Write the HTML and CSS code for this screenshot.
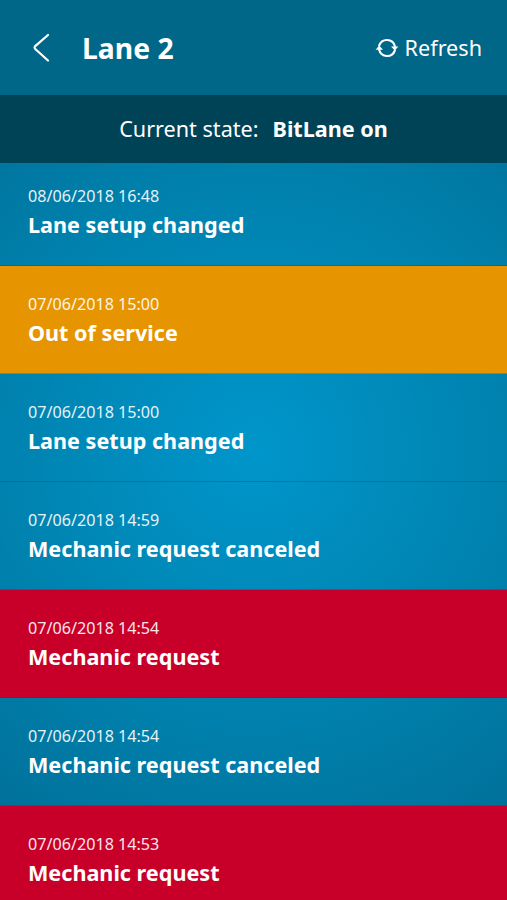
FILE: index.html
```html
<!DOCTYPE html>
<html>
<head>
    <meta charset="UTF-8">
    <title>Lane 2</title>
    <meta name="viewport" content="width=device-width, initial-scale=1">
    <link rel="stylesheet" href="styles.css">
</head>
<body>
    <div class="screen">
        <header class="top-bar">
            <a href="#" class="back" aria-label="Back">
                <svg width="18" height="30" viewBox="0 0 18 30"><path d="M16 2 L3 13.3 Q2 14.5 3 15.7 L16 27.5"/></svg>
            </a>
            <h1>Lane 2</h1>
            <button type="button" class="refresh">
                <svg width="24" height="20" viewBox="0 0 24 20">
                    <path d="M4.2 7.4 A8.2 8.2 0 0 1 19.8 8"/>
                    <path d="M19.8 12.6 A8.2 8.2 0 0 1 4.2 12"/>
                    <path class="arrow" d="M0.6 11.8 L4.2 7.6 L8 11.8 Z"/>
                    <path class="arrow" d="M16 8.4 L19.8 12.6 L23.4 8.4 Z"/>
                </svg>
                <span>Refresh</span>
            </button>
        </header>
        <div class="state">
            <span>Current state:</span>
            <strong>BitLane on</strong>
        </div>
        <ul class="events">
            <li class="event"><time>08/06/2018 16:48</time><strong>Lane setup changed</strong></li>
            <li class="event warning"><time>07/06/2018 15:00</time><strong>Out of service</strong></li>
            <li class="event"><time>07/06/2018 15:00</time><strong>Lane setup changed</strong></li>
            <li class="event"><time>07/06/2018 14:59</time><strong>Mechanic request canceled</strong></li>
            <li class="event alert"><time>07/06/2018 14:54</time><strong>Mechanic request</strong></li>
            <li class="event"><time>07/06/2018 14:54</time><strong>Mechanic request canceled</strong></li>
            <li class="event alert"><time>07/06/2018 14:53</time><strong>Mechanic request</strong></li>
        </ul>
    </div>
</body>
</html>
```

FILE: styles.css
```css
body {
    margin: 0;
    font-family: "Noto Sans", sans-serif;
    color: #ffffff;
}

.screen {
    height: 900px;
    overflow: hidden;
    background: radial-gradient(circle at 254px 450px, #0096cb 0, #0080ac 280px, #007099 450px);
}

.top-bar {
    box-sizing: border-box;
    display: flex;
    align-items: center;
    height: 95px;
    padding: 0 25px 0 32px;
    background-color: #006788;
}

.top-bar svg {
    display: block;
    fill: none;
    stroke: #ffffff;
    stroke-width: 2.2;
    stroke-linecap: round;
}

.top-bar .arrow {
    fill: #ffffff;
    stroke: none;
}

h1 {
    flex: 1;
    margin: 0 0 0 32px;
    font-size: 28.3px;
    line-height: 38px;
}

.refresh {
    display: flex;
    align-items: center;
    gap: 6px;
    padding: 1px 0 0;
    border: none;
    background: none;
    color: #ffffff;
    font: 21.6px/30px "Noto Sans", sans-serif;
}

.state {
    box-sizing: border-box;
    display: flex;
    align-items: center;
    justify-content: center;
    gap: 14px;
    height: 68px;
    padding-bottom: 1px;
    background-color: #004356;
    font-size: 21.6px;
}

.events {
    margin: 0;
    padding: 0;
    list-style: none;
}

.event {
    box-sizing: border-box;
    height: 108px;
    padding: 27px 28px 0;
    border-bottom: 1px solid rgba(0, 70, 100, 0.3);
}

.event:first-child {
    height: 103px;
    padding-top: 22px;
}

.event time {
    display: block;
    font-size: 16.15px;
    line-height: 22px;
    opacity: 0.9;
}

.event strong {
    display: block;
    font-size: 21.6px;
    line-height: 36px;
}

.warning {
    background-color: #e69500;
}

.alert {
    background-color: #c80029;
}
```
